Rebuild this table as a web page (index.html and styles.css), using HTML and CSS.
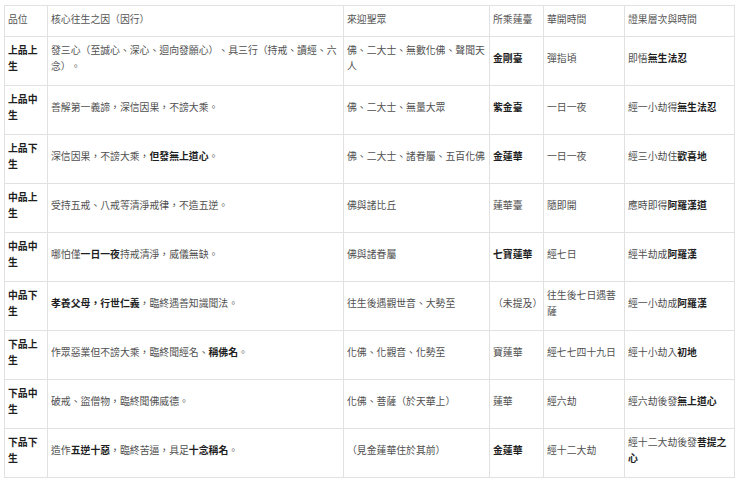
FILE: index.html
```html
<!DOCTYPE html>
<html lang="zh-Hant">
<head>
<meta charset="utf-8">
<title>九品往生</title>
<link rel="stylesheet" href="styles.css">
</head>
<body>
<div class="wrap">
<table class="grid">
  <colgroup>
    <col class="c1"><col class="c2"><col class="c3"><col class="c4"><col class="c5"><col class="c6">
  </colgroup>
  <thead>
    <tr><th>品位</th><th>核心往生之因（因行）</th><th>來迎聖眾</th><th>所乘蓮臺</th><th>華開時間</th><th>證果層次與時間</th></tr>
  </thead>
  <tbody>
    <tr><td><b>上品上生</b></td><td>發三心（至誠心、深心、迴向發願心）、具三行（持戒、讀經、六念）。</td><td>佛、二大士、無數化佛、聲聞天人</td><td><b>金剛臺</b></td><td>彈指頃</td><td>即悟<b>無生法忍</b></td></tr>
    <tr><td><b>上品中生</b></td><td>善解第一義諦，深信因果，不謗大乘。</td><td>佛、二大士、無量大眾</td><td><b>紫金臺</b></td><td>一日一夜</td><td>經一小劫得<b>無生法忍</b></td></tr>
    <tr><td><b>上品下生</b></td><td>深信因果，不謗大乘，<b>但發無上道心</b>。</td><td>佛、二大士、諸眷屬、五百化佛</td><td><b>金蓮華</b></td><td>一日一夜</td><td>經三小劫住<b>歡喜地</b></td></tr>
    <tr><td><b>中品上生</b></td><td>受持五戒、八戒等清淨戒律，不造五逆。</td><td>佛與諸比丘</td><td>蓮華臺</td><td>隨即開</td><td>應時即得<b>阿羅漢道</b></td></tr>
    <tr><td><b>中品中生</b></td><td>哪怕僅<b>一日一夜</b>持戒清淨，威儀無缺。</td><td>佛與諸眷屬</td><td><b>七寶蓮華</b></td><td>經七日</td><td>經半劫成<b>阿羅漢</b></td></tr>
    <tr><td><b>中品下生</b></td><td><b>孝養父母，行世仁義</b>，臨終遇善知識聞法。</td><td>往生後遇觀世音、大勢至</td><td class="nw">（未提及）</td><td>往生後七日遇菩薩</td><td>經一小劫成<b>阿羅漢</b></td></tr>
    <tr><td><b>下品上生</b></td><td>作眾惡業但不謗大乘，臨終聞經名、<b>稱佛名</b>。</td><td>化佛、化觀音、化勢至</td><td>寶蓮華</td><td>經七七四十九日</td><td>經十小劫入<b>初地</b></td></tr>
    <tr><td><b>下品中生</b></td><td>破戒、盜僧物，臨終聞佛威德。</td><td>化佛、菩薩（於天華上）</td><td>蓮華</td><td>經六劫</td><td>經六劫後發<b>無上道心</b></td></tr>
    <tr><td><b>下品下生</b></td><td>造作<b>五逆十惡</b>，臨終苦逼，具足<b>十念稱名</b>。</td><td>（見金蓮華住於其前）</td><td><b>金蓮華</b></td><td>經十二大劫</td><td>經十二大劫後發<b>菩提之心</b></td></tr>
  </tbody>
</table>
</div>
</body>
</html>
```
FILE: styles.css
```css
html, body {
  margin: 0;
  background: #ffffff;
}
body {
  font-family: "Noto Sans CJK TC", "Noto Sans", sans-serif;
  font-size: 9.85px;
  line-height: 16px;
  color: #505050;
  text-spacing-trim: space-all;
}
.wrap {
  padding: 5px 0 0 4px;
}
.grid {
  width: 730px;
  border-collapse: collapse;
  table-layout: fixed;
}
.c1 { width: 43px; }
.c2 { width: 296px; }
.c3 { width: 146px; }
.c4 { width: 54px; }
.c5 { width: 81px; }
.c6 { width: 110px; }
.grid th,
.grid td {
  border: 1px solid #e1e1e1;
  text-align: left;
  vertical-align: middle;
  font-weight: 400;
  padding: 5px 3px 11px;
}
.grid th {
  padding: 5px 3px 9px;
  color: #555555;
}
.grid b {
  font-weight: 700;
  color: #1e1e1e;
}
.nw {
  white-space: nowrap;
}
```
